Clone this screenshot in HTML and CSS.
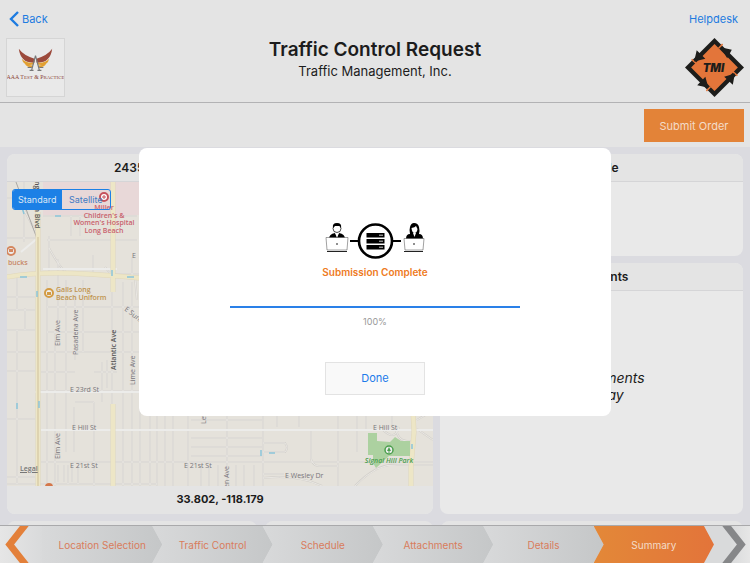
FILE: index.html
```html
<!DOCTYPE html>
<html lang="en">
<head>
    <meta charset="UTF-8">
    <meta name="viewport" content="width=device-width, initial-scale=1.0">
    <title>Traffic Control Request</title>
    <link rel="stylesheet" href="styles.css">
</head>
<body>

    <header class="header">
        <div class="nav-row">
            <a href="#" class="back">
                <svg width="10" height="16" viewBox="0 0 10 16"><path d="M9 1 L2 8 L9 15" fill="none" stroke="#1d7be0" stroke-width="2.4"/></svg>
                Back
            </a>
            <a href="#">Helpdesk</a>
        </div>
        <div class="title-row">
            <div class="client-logo">
                <svg viewBox="0 0 58 58" role="img" aria-label="AAA Test &amp; Practice">
                    <path d="M12 10 Q17 17 28 20 L28 24 Q14 25 12 10Z M46 10 Q41 17 30 20 L30 24 Q44 25 46 10Z" fill="#9c4a3c"/>
                    <path d="M15 20 Q20 25 27 24 L27 26 Q17 28 15 20Z M18 25 Q22 27 26 27 L26 29 Q20 29 18 25Z M43 20 Q38 25 31 24 L31 26 Q41 28 43 20Z M40 25 Q36 27 32 27 L32 29 Q38 29 40 25Z" fill="#e2a032"/>
                    <path d="M29 17 L25 32 M29 17 L33 32 M21 29 H25 M33 29 H37 M23 32 H27 M31 32 H35" fill="none" stroke="#777" stroke-width="1.2"/>
                    <text x="29" y="41" text-anchor="middle" class="logo-text">AAA T<tspan class="small-cap">EST</tspan> &amp; P<tspan class="small-cap">RACTICE</tspan></text>
                </svg>
            </div>
            <div class="titles">
                <h1>Traffic Control Request</h1>
                <p>Traffic Management, Inc.</p>
            </div>
            <div class="company-logo">
                <svg viewBox="0 0 58 58" role="img" aria-label="TMI">
                    <path d="M29 0 L58 29 L29 58 L0 29Z" fill="#1d1d1b"/>
                    <path d="M29 6 L52 29 L29 52 L6 29Z" fill="#e3753a"/>
                    <path d="M6.500 21 L11 25 M37 6 L33 10 M51.500 37 L47 33 M21 52 L25 48" stroke="#e3753a" stroke-width="1.5"/>
                    <path d="M9 23 L11.500 12 L20 20.500Z M35 9 L46 11.500 L41.500 20Z M49 35 L47 46 L38.500 38Z M23 49 L12 46.500 L20 38Z" fill="#1d1d1b"/>
                    <text x="28" y="33" text-anchor="middle" class="tmi-text">TMI</text>
                </svg>
            </div>
        </div>
    </header>

    <div class="toolbar">
        <button type="button" class="submit-btn">Submit Order</button>
    </div>

    <main class="content">
        <div class="columns">
            <section class="card">
                <h2>2435 Pasadena Avenue, Long Beach</h2>
                <div class="map">
                    <svg class="map-canvas" viewBox="0 0 426 304" preserveAspectRatio="xMinYMin slice" role="img" aria-label="Map">
                        <rect width="426" height="304" fill="#e5e2db"/>
                        <path d="M26 0 H426 V33 H36 V0" fill="#e8d8d8"/>
                        <!-- small streets -->
                        <g class="minor-outline">
                            <path id="streets" d="M0 16 H14 M17 0 V60 M14 22 L32 56 M0 56 H30 M36 34 H130 M40 58 H130 M40 92 H132 M42 54 V92 M64 34 V54 M73 34 V54 M42 66 Q55 90 62 92 M86 73 V95 M107 54 V95 M0 115 H28 M10 96 V128 M0 128 H28 M18 126 V148 M0 148 H28 M0 170 H28 M0 189 H28 M10 148 V302 M0 237 H28 M0 295 H28
                                M40 98 V304 M48 148 V304 M59 98 V270 M51 77 V140 M68 105 V178 M67 225 V270 M76 98 V170 M87 220 V304 M95 180 V220 M100 206 V178 M105 98 V230 M116 100 V304 M125 100 V304 M133 148 V304
                                M40 125 H132 M40 150 H132 M34 170 H426 M34 190 H68 M87 190 H110 M68 220 H87 M34 209 H426 M34 248 H426 M34 280 H426
                                M51 283 V300 M57 283 V300 M61 283 V302 M65 283 V300 M71 283 V302 M0 302 H150 M143 230 V304 M150 230 V304 M158 230 V304 M166 230 V304 M181 230 V304 M220 230 V304
                                M184 238 H255 M184 256 H255 M184 265 H255 M184 274 H255 M194 283 V304 M202 283 V304 M211 283 V304 M229 283 V304 M237 283 V304 M247 283 V304
                                M256 230 V304 M256 270 H278 Q282 266 278 261 H256 M270 230 V245 M292 230 V245 M304 247 V277 Q306 284 312 284 H331 M331 230 V304 M350 230 V270 M359 230 V247 M385 230 V245 M389 247 Q391 259 400 259 H406 M348 304 Q370 281 390 283 H426 M256 296 Q290 292 315 304 M256 292 H277 M375 247 Q388 260 392 245 M410 247 L426 258 M410 238 Q419 232 426 230
                                M98 85 Q105 96 119 95 M125 75 V94 M128 96 L130 118"/>
                        </g>
                        <use href="#streets" class="minor"/>
                        <path d="M36 87 H110 M28 210 H426 M34 248 H426 M14 70 L32 55" class="white-road"/>
                        <path d="M9 0 L32 62" stroke="#aaa8a4" stroke-width="1" fill="none"/>
                        <!-- main roads -->
                        <path d="M31 30 V304 M0 95 Q22 91 50 91 T132 96 M106 0 V110 M106 222 V304 M406 230 L407 250 L404 285 V304" class="road-edge"/>
                        <path d="M31 30 V304 M0 95 Q22 91 50 91 T132 96 M106 0 V110 M106 222 V304 M406 230 L407 250 L404 285 V304" class="road"/>
                        <path d="M31 55 V304" stroke="#cfc09a" stroke-width="1"/>
                        <path d="M361 251 H370 V259 L383 260 L388 255 L394 259 H403 V274 H382 L369 286 L366 281 V273 H361Z" fill="#acd1a0"/>
                        <!-- one way arrows -->
                        <path d="M14 22 L17 32 M48 34 H54 M30 109 V115 M13 95 H20 M120 95 H127 M105 88 V94 M10 221 V227 M32 219 V226 M262 271 H268 M254 268 V274 M405 262 V267" stroke="#8ac5da" stroke-width="1.5"/>
                        <!-- street names -->
                        <g class="street">
                            <text transform="translate(53 164) rotate(-90)">Elm Ave</text>
                            <text transform="translate(53 277) rotate(-90)">Elm Ave</text>
                            <text transform="translate(71 173) rotate(-90)">Pasadena Ave</text>
                            <text transform="translate(109 188) rotate(-90)" class="street-main">Atlantic Ave</text>
                            <text transform="translate(128 203) rotate(-90)">Lime Ave</text>
                            <text transform="translate(28 -9) rotate(90)" class="street-main">Long Beach Blvd</text>
                            <text transform="translate(199 242) rotate(-90)">Lewis Ave</text>
                            <text transform="translate(222 320) rotate(-90)">Linden Ave</text>
                            <text transform="translate(117 128) rotate(38)">E Sunset St</text>
                            <text x="63" y="210">E 23rd St</text>
                            <text x="65" y="248">E Hill St</text>
                            <text x="63" y="286">E 21st St</text>
                            <text x="177" y="286">E 21st St</text>
                            <text x="366" y="248">E Hill St</text>
                            <text x="278" y="296">E Wesley Dr</text>
                            <text x="125" y="76">E</text>
                        </g>
                        <g class="hospital">
                            <circle cx="97" cy="15" r="4" fill="#fff" stroke="#c5525c" stroke-width="2"/>
                            <path d="M95 15 H99 M97 13 V17" stroke="#c5525c"/>
                            <text x="97" y="28">Miller</text>
                            <text x="97" y="36">Children's &amp;</text>
                            <text x="97" y="43">Women's Hospital</text>
                            <text x="97" y="51">Long Beach</text>
                        </g>
                        <circle cx="4" cy="69" r="4" fill="#eee" stroke="#d4875f" stroke-width="2"/>
                        <path d="M2 67 H6 V70 H2Z" fill="#d4875f"/>
                        <text x="1" y="83" class="place cafe">bucks</text>
                        <circle cx="42" cy="111" r="4" fill="#eee" stroke="#d39b43" stroke-width="2"/>
                        <path d="M40 110 H44 V113 H40Z" fill="#d39b43"/>
                        <text x="49" y="110" class="place shop">Galls Long</text>
                        <text x="49" y="118" class="place shop">Beach Uniform</text>
                        <circle cx="42" cy="305" r="4" fill="#d4774a"/>
                        <circle cx="382" cy="268" r="4" fill="#eee" stroke="#4c9e4e" stroke-width="1.5"/>
                        <path d="M382 265 L384 269 H380Z M381.5 268 H382.5 V271 H381.5Z" fill="#4c9e4e"/>
                        <text x="382" y="281" class="place park">Signal Hill Park</text>
                    </svg>
                    <div class="map-type">
                        <button type="button" class="active">Standard</button>
                        <button type="button">Satellite</button>
                    </div>
                    <a href="#" class="legal">Legal</a>
                </div>
                <div class="coords">33.802, -118.179</div>
            </section>

            <div class="side">
                <section class="card schedule">
                    <h2>Schedule</h2>
                </section>
                <section class="card attachments">
                    <h2>Attachments</h2>
                    <p>No Attachments<br>to display</p>
                </section>
            </div>
        </div>
        <div class="more-cards">
            <section class="card"></section>
            <section class="card"></section>
            <section class="card"></section>
        </div>
    </main>

    <nav class="steps">
        <button type="button" class="arrow prev" aria-label="Previous">
            <svg width="24" height="38" viewBox="0 0 24 38"><path d="M15 0 H24 L9 19 L24 38 H15 L0 19Z" fill="#e3803a"/></svg>
        </button>
        <a href="#" class="step">Location Selection</a>
        <a href="#" class="step">Traffic Control</a>
        <a href="#" class="step">Schedule</a>
        <a href="#" class="step">Attachments</a>
        <a href="#" class="step">Details</a>
        <a href="#" class="step current">Summary</a>
        <button type="button" class="arrow next" aria-label="Next">
            <svg width="24" height="38" viewBox="0 0 24 38"><path d="M9 0 H0 L15 19 L0 38 H9 L24 19Z" fill="#868789"/></svg>
        </button>
    </nav>

    <div class="overlay">
        <div class="modal" role="dialog" aria-labelledby="modalTitle">
            <svg class="modal-icon" width="100" height="38" viewBox="0 0 100 38">
                <path d="M25 19 H34 M67 19 H76" stroke="#000" stroke-width="2"/>
                <circle cx="50.500" cy="19" r="16.5" fill="#fff" stroke="#000" stroke-width="2.6"/>
                <g fill="#000">
                    <rect x="41.500" y="11" width="18" height="4.5"/>
                    <rect x="41.500" y="17" width="18" height="4.5"/>
                    <rect x="41.500" y="23" width="18" height="4.5"/>
                </g>
                <path d="M54 13.2 H58 M54 19.2 H58 M54 25.2 H58" stroke="#fff" stroke-width=".8"/>
                <!-- man -->
                <path d="M4 17 Q4 12 10 11 L12 13 L14 11 Q20 12 20 17Z" fill="#000"/>
                <path d="M10 11 L12 16 L14 11Z" fill="#fff"/>
                <circle cx="12" cy="6.5" r="4" fill="#fff" stroke="#000" stroke-width=".7"/>
                <path d="M8 6 Q7 1 12 1 Q17 1 16 6 L14.500 4 H10Z" fill="#000"/>
                <path d="M1 15.500 H23 L22 28 H2Z" fill="#fff" stroke="#444" stroke-width=".5"/>
                <path d="M2 29.500 H22" stroke="#222" stroke-width="1"/>
                <circle cx="12" cy="22" r=".8" fill="#000"/>
                <!-- woman -->
                <path d="M81 17 Q81 12 85 12 Q84 8 85 5 Q86 1 89 1 Q93 1 94 5 Q95 9 94 12 Q98 12 98 17Z" fill="#000"/>
                <path d="M86.500 6 Q90 5.500 91 4 L92.500 7 Q92 11 89.500 11 Q87 11 86.500 6Z M88 11 H91 L89.500 15Z" fill="#fff"/>
                <path d="M79 16.500 H99 L98 28 H80Z" fill="#fff" stroke="#444" stroke-width=".5"/>
                <path d="M79 29.500 H98" stroke="#222" stroke-width="1"/>
                <circle cx="89" cy="22" r=".8" fill="#000"/>
            </svg>
            <h3 id="modalTitle">Submission Complete</h3>
            <div class="progress"><div class="progress-bar" style="width: 100%"></div></div>
            <p class="percent">100%</p>
            <button type="button" class="done-btn">Done</button>
        </div>
    </div>

</body>
</html>
```
FILE: styles.css
```css
:root {
    --bg-color: #e4e4e4;
    --content-bg: #dbdbe0;
    --card-bg: #e9e9e9;
    --blue: #1d7be0;
    --orange: #e38338;
    --text-color: #1c1c1c;
}

* {
    box-sizing: border-box;
}

body {
    margin: 0;
    height: 100vh;
    display: flex;
    flex-direction: column;
    overflow: hidden;
    background: var(--bg-color);
    font-family: Inter, "Liberation Sans", sans-serif;
    font-size: 11px;
    color: var(--text-color);
}

h1, h2, h3, p {
    margin: 0;
}

a {
    color: var(--blue);
    text-decoration: none;
}

button {
    font: inherit;
    padding: 0;
    border: none;
    cursor: pointer;
}

/* Header */
.header {
    padding: 10px 6px 5px;
    border-bottom: 1px solid #b2b2b4;
}

.nav-row {
    display: flex;
    justify-content: space-between;
    align-items: center;
    height: 18px;
    padding: 0 6px 0 3px;
}

.back {
    display: flex;
    align-items: center;
    gap: 3px;
}

.title-row {
    display: flex;
    justify-content: space-between;
    align-items: center;
    margin-top: 10px;
}

.client-logo,
.company-logo {
    width: 59px;
    height: 59px;
}

.client-logo {
    background: var(--card-bg);
    border: 1px solid #d5d5d5;
}

.client-logo svg,
.company-logo svg {
    display: block;
    width: 100%;
    height: 100%;
}

.logo-text {
    font-family: "Liberation Serif", serif;
    font-size: 6px;
    fill: #8c4437;
}

.small-cap {
    font-size: 5px;
}

.tmi-text {
    font-size: 11px;
    font-weight: 900;
    font-style: italic;
    fill: #1d1d1b;
}

.titles {
    text-align: center;
    padding-bottom: 17px;
}

.titles h1 {
    font-size: 19px;
    font-weight: 600;
    line-height: 24px;
}

.titles p {
    font-size: 13px;
    line-height: 18px;
}

.toolbar {
    display: flex;
    justify-content: flex-end;
    padding: 6px 6px 5px;
}

.submit-btn {
    width: 100px;
    height: 33px;
    background: var(--orange);
    color: #f3dcc8;
}

/* Content */
.content {
    flex: 1;
    min-height: 0;
    overflow: hidden;
    padding: 7px;
    background: var(--content-bg);
}

.columns {
    display: grid;
    grid-template-columns: 426fr 303fr;
    gap: 7px;
}

.card {
    background: var(--card-bg);
    border-radius: 8px;
    overflow: hidden;
}

.card h2 {
    height: 28px;
    line-height: 28px;
    font-size: 12px;
    font-weight: 600;
    text-align: center;
    background: var(--bg-color);
    border-bottom: 1px solid #d5d5d7;
}

.map {
    position: relative;
    height: 304px;
}

.map-canvas {
    display: block;
    width: 100%;
    height: 100%;
}

.minor-outline {
    fill: none;
    stroke: #d3d0cb;
    stroke-width: 2;
}

.minor {
    fill: none;
    stroke: #e9e7e3;
    stroke-width: 1;
}

.white-road {
    fill: none;
    stroke: #ececea;
    stroke-width: 2;
}

.road-edge {
    fill: none;
    stroke: #e0d7bb;
    stroke-width: 5;
}

.road {
    fill: none;
    stroke: #ede6c6;
    stroke-width: 4;
}

.street {
    font-family: "Open Sans", sans-serif;
    font-size: 7px;
    fill: #77757a;
}

.street-main {
    font-weight: 600;
    fill: #555;
}

.hospital text,
.place {
    font-family: "Open Sans", sans-serif;
    font-size: 7px;
    font-weight: 600;
}

.hospital text {
    fill: #c9616d;
    text-anchor: middle;
}

.cafe {
    fill: #c78767;
}

.shop {
    fill: #c0944e;
}

.park {
    fill: #4c9e4e;
    font-style: italic;
    text-anchor: middle;
}

.map-type {
    position: absolute;
    top: 7px;
    left: 5px;
    display: grid;
    grid-template-columns: 1fr 1fr;
    width: 99px;
    height: 21px;
    border: 1px solid #1c80e6;
    border-radius: 3px;
    overflow: hidden;
}

.map-type button {
    font-size: 9px;
    background: transparent;
    color: #3f7bc4;
}

.map-type .active {
    background: #1c80e6;
    color: #dce8f5;
}

.legal {
    position: absolute;
    left: 13px;
    bottom: 12px;
    font-family: "Open Sans", sans-serif;
    font-size: 7px;
    font-weight: 600;
    line-height: 10px;
    color: #777;
    text-decoration: underline;
}

.coords {
    height: 28px;
    line-height: 27px;
    font-weight: 700;
    text-align: center;
    background: var(--bg-color);
}

.side {
    display: flex;
    flex-direction: column;
    gap: 7px;
}

.schedule {
    height: 102px;
}

.attachments {
    flex: 1;
    display: flex;
    flex-direction: column;
}

.attachments p {
    margin: auto;
    padding-bottom: 34px;
    text-align: center;
    font-size: 14px;
    font-style: italic;
    line-height: 17px;
}

.more-cards {
    display: grid;
    grid-template-columns: 250fr 168fr 302fr;
    gap: 8px;
    margin-top: 7px;
}

.more-cards .card {
    height: 100px;
    background: var(--bg-color);
}

/* Steps */
.steps {
    display: flex;
    height: 38px;
    border-top: 1px solid #a9a9ab;
    background: linear-gradient(to right, #e6e6e6, #d9dadb 42px, #d9dadb calc(100% - 20px), #e6e6e6);
}

.arrow {
    flex: none;
    background: transparent;
}

.arrow svg {
    display: block;
    height: 37px;
}

.prev {
    width: 42px;
    padding-left: 5px;
}

.next {
    width: 36px;
    padding-left: 8px;
}

.step {
    flex: 1;
    display: flex;
    align-items: center;
    justify-content: center;
    margin-left: -10px;
    font-size: 10px;
    white-space: nowrap;
    color: #d97c5c;
    background: linear-gradient(to right, #d8d9da, #c5c7c8);
    clip-path: polygon(0 0, calc(100% - 10px) 0, 100% 50%, calc(100% - 10px) 100%, 0 100%, 10px 50%);
}

.prev + .step {
    margin-left: 0;
    clip-path: polygon(0 0, calc(100% - 10px) 0, 100% 50%, calc(100% - 10px) 100%, 0 100%);
}

.step.current {
    color: #f3dcc8;
    background: linear-gradient(to right, #e38838, #e3743a);
}

/* Modal */
.overlay {
    position: fixed;
    inset: 0;
    display: flex;
    align-items: center;
    justify-content: center;
}

.modal {
    display: flex;
    flex-direction: column;
    align-items: center;
    width: 90%;
    max-width: 472px;
    padding: 74px 24px 21px;
    border-radius: 8px;
    background: #fff;
}

.modal-icon {
    display: block;
}

.modal h3 {
    margin-top: 4px;
    font-size: 10px;
    font-weight: 600;
    line-height: 16px;
    color: #ee7a22;
}

.progress {
    width: 290px;
    max-width: 100%;
    height: 2px;
    margin-top: 26px;
    background: #ddd;
}

.progress-bar {
    height: 2px;
    background: #2a80e8;
}

.percent {
    margin-top: 7px;
    font-size: 9px;
    line-height: 14px;
    color: #999;
}

.done-btn {
    width: 100px;
    height: 33px;
    margin-top: 33px;
    border: 1px solid #e3e3e3;
    background: #f9f9f9;
    color: #1d7bea;
}
```
